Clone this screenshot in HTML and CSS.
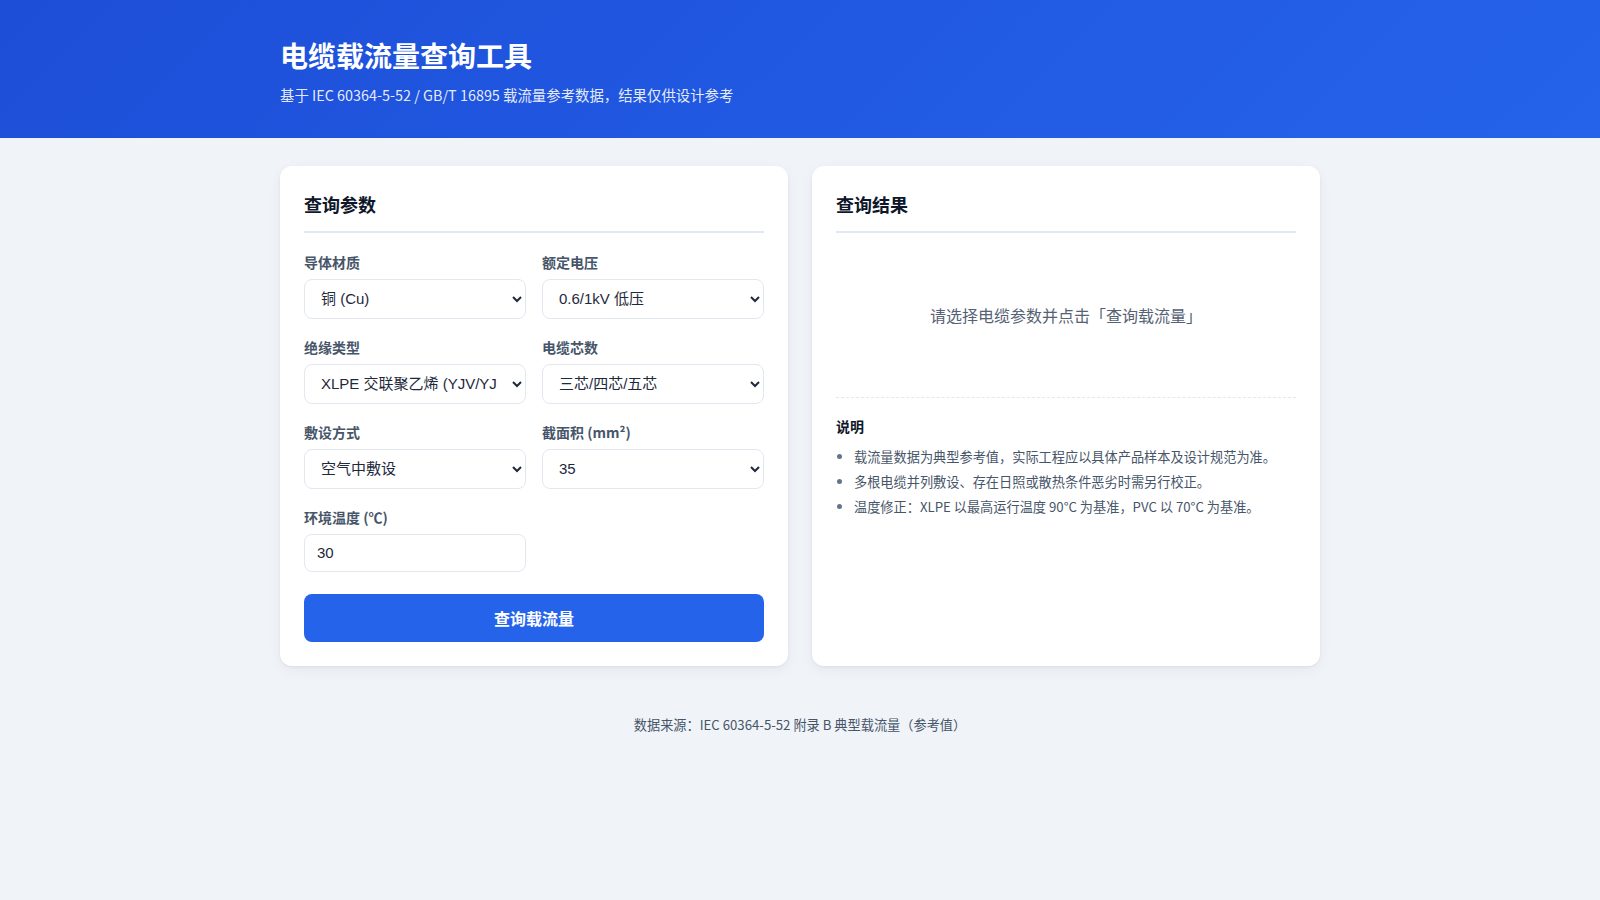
FILE: index.html
```html
<!DOCTYPE html>
<html lang="zh-CN">
<head>
<meta charset="utf-8">
<title>电缆载流量查询工具</title>
<link rel="stylesheet" href="styles.css">
</head>
<body>
<header class="hero">
  <div class="wrap">
    <h1 class="hero-title">电缆载流量查询工具</h1>
    <p class="hero-sub">基于 IEC 60364-5-52 / GB/T 16895 载流量参考数据，结果仅供设计参考</p>
  </div>
</header>
<main class="wrap main">
  <section class="card">
    <h2 class="card-title">查询参数</h2>
    <div class="form-grid">
      <div class="field">
        <label class="label" for="mat">导体材质</label>
        <select id="mat" class="control">
          <option>铜 (Cu)</option>
          <option>铝 (Al)</option>
        </select>
      </div>
      <div class="field">
        <label class="label" for="volt">额定电压</label>
        <select id="volt" class="control">
          <option>0.6/1kV 低压</option>
          <option>8.7/15kV 中压</option>
        </select>
      </div>
      <div class="field">
        <label class="label" for="ins">绝缘类型</label>
        <select id="ins" class="control">
          <option>XLPE 交联聚乙烯 (YJV/YJLV)</option>
          <option>PVC 聚氯乙烯 (VV/VLV)</option>
        </select>
      </div>
      <div class="field">
        <label class="label" for="cores">电缆芯数</label>
        <select id="cores" class="control">
          <option>三芯/四芯/五芯</option>
          <option>单芯</option>
          <option>二芯</option>
        </select>
      </div>
      <div class="field">
        <label class="label" for="lay">敷设方式</label>
        <select id="lay" class="control">
          <option>空气中敷设</option>
          <option>直埋敷设</option>
          <option>穿管敷设</option>
        </select>
      </div>
      <div class="field">
        <label class="label" for="area">截面积 (mm²)</label>
        <select id="area" class="control">
          <option>1.5</option><option>2.5</option><option>4</option><option>6</option>
          <option>10</option><option>16</option><option>25</option>
          <option selected>35</option><option>50</option><option>70</option>
          <option>95</option><option>120</option><option>150</option>
          <option>185</option><option>240</option>
        </select>
      </div>
      <div class="field">
        <label class="label" for="temp">环境温度 (℃)</label>
        <input id="temp" class="control input" type="number" value="30">
      </div>
    </div>
    <button class="btn" type="button">查询载流量</button>
  </section>
  <section class="card">
    <h2 class="card-title">查询结果</h2>
    <div class="placeholder">请选择电缆参数并点击「查询载流量」</div>
    <div class="notes">
      <h3 class="notes-title">说明</h3>
      <ul class="notes-list">
        <li>载流量数据为典型参考值，实际工程应以具体产品样本及设计规范为准。</li>
        <li>多根电缆并列敷设、存在日照或散热条件恶劣时需另行校正。</li>
        <li>温度修正：XLPE 以最高运行温度 90°C 为基准，PVC 以 70°C 为基准。</li>
      </ul>
    </div>
  </section>
</main>
<footer class="footer">数据来源：IEC 60364-5-52 附录 B 典型载流量（参考值）</footer>
</body>
</html>
```
FILE: styles.css
```css
* { box-sizing: border-box; }
html, body { margin: 0; padding: 0; }
body {
  font-family: "Noto Sans CJK SC", "Noto Sans", sans-serif;
  background: #f0f4f8;
  color: #0f172a;
  min-height: 100vh;
}
.wrap {
  max-width: 1040px;
  margin: 0 auto;
}
.hero {
  background: linear-gradient(135deg, #1d4ed8 0%, #2563eb 100%);
  color: #fff;
  padding: 36px 0 32px;
}
.hero-title {
  margin: 0 0 9px;
  font-size: 28px;
  line-height: 1.4;
  font-weight: 700;
}
.hero-sub {
  margin: 0;
  font-size: 14.4px;
  line-height: 1.5;
  color: rgba(255, 255, 255, 0.9);
}
.main {
  display: grid;
  grid-template-columns: minmax(0, 1fr) minmax(0, 1fr);
  gap: 24px;
  padding: 28px 0;
}
.card {
  background: #fff;
  border-radius: 12px;
  box-shadow: 0 1px 3px rgba(15, 23, 42, 0.06), 0 4px 14px rgba(15, 23, 42, 0.05);
  padding: 24px;
}
.card-title {
  margin: 0 0 19px;
  font-size: 18px;
  line-height: 1.6;
  font-weight: 700;
  color: #0f172a;
  padding-bottom: 12px;
  border-bottom: 2px solid #e2e8f0;
}
.form-grid {
  display: grid;
  grid-template-columns: minmax(0, 1fr) minmax(0, 1fr);
  column-gap: 16px;
  row-gap: 18px;
}
.field {
  display: flex;
  flex-direction: column;
  min-width: 0;
}
.label {
  font-size: 14px;
  line-height: 20px;
  font-weight: 600;
  color: #475569;
  margin-bottom: 7px;
}
.control {
  width: 100%;
  min-width: 0;
  height: 40px;
  padding: 0 12px;
  border: 1px solid #e2e8f0;
  border-radius: 8px;
  background: #fff;
  font-family: "Liberation Sans", "Noto Sans CJK SC", sans-serif;
  font-size: 15px;
  color: #1e293b;
}
.input {
  height: 38px;
}
.btn {
  display: block;
  width: 100%;
  height: 48px;
  margin-top: 22px;
  border: none;
  border-radius: 8px;
  background: #2563eb;
  color: #fff;
  font-family: "Noto Sans CJK SC", sans-serif;
  font-size: 16px;
  font-weight: 700;
  cursor: pointer;
}
.placeholder {
  padding: 51px 0 50px;
  text-align: center;
  font-size: 16px;
  line-height: 24px;
  color: #556274;
}
.notes {
  margin-top: 20px;
  border-top: 1px dashed #e2e8f0;
  padding-top: 17px;
}
.notes-title {
  margin: 0 0 7px;
  font-size: 14px;
  line-height: 22px;
  font-weight: 700;
  color: #0f172a;
}
.notes-list {
  margin: 0;
  padding-left: 18px;
  font-size: 13.2px;
  line-height: 25px;
  color: #475569;
}
.notes-list li::marker {
  color: #64748b;
}
.footer {
  text-align: center;
  font-size: 13.2px;
  line-height: 20px;
  color: #475569;
  padding: 21px 0 40px;
}
```
